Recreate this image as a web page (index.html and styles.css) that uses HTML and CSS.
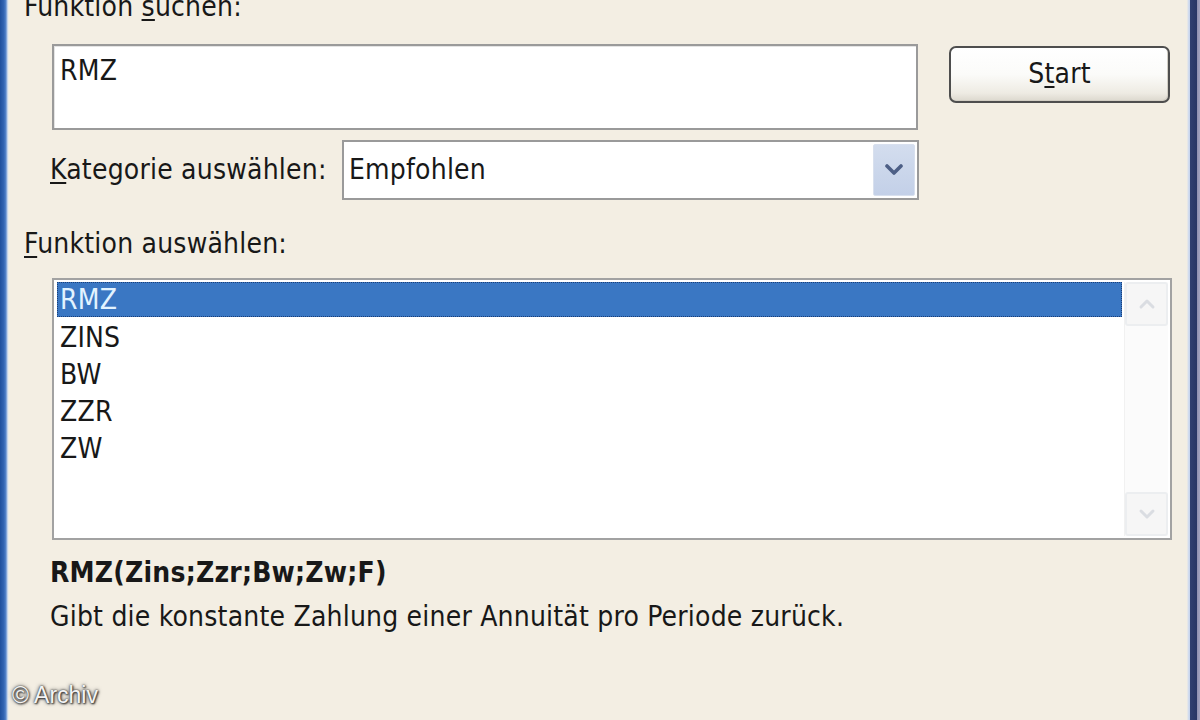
FILE: index.html
```html
<!DOCTYPE html>
<html lang="de">
<head>
<meta charset="utf-8">
<title>Funktion einfügen</title>
<link rel="stylesheet" href="styles.css">
</head>
<body>
<div class="window">
  <div class="frame-left"></div>
  <div class="main">
    <div class="label label-top">Funktion <u>s</u>uchen:</div>
    <div class="search-row">
      <div class="search-box"><span class="search-text">RMZ</span></div>
      <div class="start-btn">S<u>t</u>art</div>
    </div>
    <div class="cat-row">
      <div class="label cat-label"><u>K</u>ategorie auswählen:</div>
      <div class="combo">
        <span class="combo-text">Empfohlen</span>
        <span class="combo-btn">
          <svg width="18" height="12" viewBox="0 0 18 12"><path d="M2 2 L9 9 L16 2" fill="none" stroke="#4d5f86" stroke-width="3.6" stroke-linecap="round" stroke-linejoin="round"/></svg>
        </span>
      </div>
    </div>
    <div class="label func-label"><u>F</u>unktion auswählen:</div>
    <div class="listbox">
      <div class="items">
        <div class="item selected">RMZ</div>
        <div class="item">ZINS</div>
        <div class="item">BW</div>
        <div class="item">ZZR</div>
        <div class="item">ZW</div>
      </div>
      <div class="scrollbar">
        <div class="sb-btn">
          <svg width="18" height="12" viewBox="0 0 18 12"><path d="M3 9 L9 3 L15 9" fill="none" stroke="#dadde2" stroke-width="3" stroke-linecap="round" stroke-linejoin="round"/></svg>
        </div>
        <div class="sb-track"></div>
        <div class="sb-btn">
          <svg width="18" height="12" viewBox="0 0 18 12"><path d="M3 3 L9 9 L15 3" fill="none" stroke="#dadde2" stroke-width="3" stroke-linecap="round" stroke-linejoin="round"/></svg>
        </div>
      </div>
    </div>
    <div class="syntax">RMZ(Zins;Zzr;Bw;Zw;F)</div>
    <div class="desc">Gibt die konstante Zahlung einer Annuität pro Periode zurück.</div>
  </div>
  <div class="frame-right"></div>
  <div class="watermark">© Archiv</div>
</div>
</body>
</html>
```
FILE: styles.css
```css
* { box-sizing: border-box; }
html, body { margin: 0; padding: 0; }
body {
  width: 1200px;
  height: 720px;
  overflow: hidden;
  background: #f3eee3;
  font-family: "DejaVu Sans Condensed", "DejaVu Sans", sans-serif;
  font-size: 28px;
  letter-spacing: 0.2px;
  color: #181818;
}
.window {
  position: relative;
  display: flex;
  width: 1200px;
  height: 720px;
}
.frame-left {
  width: 9px;
  flex: none;
  background: linear-gradient(to right, #1f4f9c 0, #3466b4 4px, #5a88cc 6px, #a9c0e4 7px, #dfe6ee 8px, #f3eee3 9px);
}
.frame-right {
  width: 13px;
  flex: none;
  background: linear-gradient(to right, #f3eee3 0, #d8e0ee 1px, #c3d2ee 3px, #2f3f70 3px, #273565 10px, #8d8fb0 10px, #a3a3c0 13px);
}
.main {
  flex: 1;
  display: flex;
  flex-direction: column;
}
.label { line-height: 30px; white-space: nowrap; }
u { text-decoration-thickness: 2px; text-underline-offset: 3px; }
.label-top { margin: -8px 0 0 15px; }

.search-row {
  display: flex;
  align-items: flex-start;
  margin: 22px 0 0 43px;
}
.search-box {
  width: 866px;
  height: 86px;
  background: #fff;
  border: 2px solid #9a9a9a;
  box-shadow: inset 1px 1px 0 #e4e4e4;
  padding: 8px 0 0 6px;
  line-height: 34px;
}
.start-btn {
  margin: 2px 0 0 31px;
  width: 221px;
  height: 57px;
  border: 2px solid #4e4e4e;
  border-radius: 7px;
  background: linear-gradient(to bottom, #ffffff 0, #fbfbf9 50%, #eeebe3 85%, #dcd8ce 100%);
  box-shadow: inset -1px -1px 0 #d2cec4;
  text-align: center;
  line-height: 52px;
}

.cat-row {
  display: flex;
  align-items: center;
  margin: 10px 0 0 41px;
}
.cat-label { width: 292px; }
.combo {
  width: 577px;
  height: 60px;
  background: #fff;
  border: 2px solid #9a9a9a;
  display: flex;
  align-items: stretch;
  padding: 2px;
}
.combo-text {
  flex: 1;
  padding-left: 3px;
  line-height: 52px;
}
.combo-btn {
  width: 42px;
  background: linear-gradient(to bottom, #d3ddee, #c3d0e8);
  border: 1px solid #d8e0ee;
  border-radius: 2px;
  display: flex;
  align-items: center;
  justify-content: center;
}

.func-label { margin: 29px 0 0 15px; }

.listbox {
  margin: 19px 0 0 43px;
  width: 1120px;
  height: 262px;
  background: #fff;
  border: 2px solid #a2a2a2;
  display: flex;
  padding: 2px 2px 2px 3px;
}
.items { flex: 1; }
.item {
  height: 37px;
  line-height: 37px;
  padding-left: 3px;
  white-space: nowrap;
}
.item.selected {
  height: 35px;
  line-height: 33px;
  margin-bottom: 2px;
  background: #3a77c3;
  color: #e2f3ff;
  border: 1px dotted #1b3f78;
  padding-left: 2px;
}
.scrollbar {
  width: 44px;
  margin-left: 2px;
  display: flex;
  flex-direction: column;
  background: #fbfbfb;
  border-left: 1px solid #f1f1f1;
}
.sb-btn {
  height: 44px;
  background: #f6f6f6;
  border: 2px solid #eceef0;
  border-radius: 3px;
  display: flex;
  align-items: center;
  justify-content: center;
}
.sb-track { flex: 1; }

.syntax {
  margin: 16px 0 0 41px;
  font-weight: bold;
  line-height: 34px;
}
.desc {
  margin: 9px 0 0 41px;
  line-height: 36px;
  white-space: nowrap;
}

.watermark {
  position: absolute;
  left: 12px;
  top: 682px;
  font-family: "Liberation Sans", Arial, sans-serif;
  font-size: 23px;
  letter-spacing: 0;
  color: #f4f4f4;
  text-shadow: 0 0 2px #333, 0 0 4px #555, 1px 1px 2px #222;
}
```
